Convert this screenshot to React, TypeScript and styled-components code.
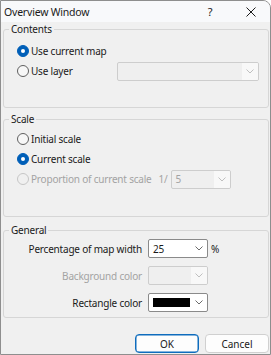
import React from 'react';
import styled, { createGlobalStyle } from 'styled-components';

const GlobalStyle = createGlobalStyle`
  body {
    margin: 0;
    font-family: "Noto Sans", "Open Sans", sans-serif;
    font-size: 10px;
    letter-spacing: -0.2px;
    color: #1a1a1a;
  }
`;

const WindowBlock = styled.div`
  box-sizing: border-box;
  width: 271px;
  height: 355px;
  display: flex;
  flex-direction: column;
  border: 1px solid #8e8e8e;
  border-top-right-radius: 8px;
  background: #f0f0f0;
  overflow: hidden;
`;

const TitleBarBlock = styled.div`
  height: 21px;
  display: flex;
  align-items: center;
  padding-left: 3px;
  background: #f8f9fb;
`;

const TitleText = styled.span`
  flex: 1;
  font-size: 10.5px;
`;

const HelpGlyph = styled.span`
  width: 16px;
  margin-right: 24px;
  text-align: center;
  font-size: 11px;
`;

const CloseBox = styled.span`
  display: flex;
  width: 18px;
  margin-right: 10px;
  justify-content: center;
`;

const BodyBlock = styled.div`
  flex: 1;
  display: flex;
  flex-direction: column;
  padding: 0 1px 1px 2px;
`;

const GroupBlock = styled.fieldset<{ $mt: number }>`
  margin: ${(p) => p.$mt}px 0 0 0;
  padding: 0;
  border: 1px solid #d6d6d6;
  border-radius: 3px;
  min-width: 0;
`;

const GroupTitle = styled.legend`
  margin-left: 5px;
  padding: 0 2px;
  line-height: 14px;
`;

const GroupContent = styled.div<{ $pt: number; $pb: number }>`
  display: flex;
  flex-direction: column;
  padding: ${(p) => p.$pt}px 9px ${(p) => p.$pb}px 13px;
`;

const RadioRow = styled.div`
  height: 20px;
  display: flex;
  align-items: center;
`;

const RadioMark = styled.span<{ $checked?: boolean; $disabled?: boolean }>`
  box-sizing: border-box;
  width: 12px;
  height: 12px;
  flex-shrink: 0;
  border-radius: 50%;
  margin-right: 2px;
  border: 1px solid ${(p) => (p.$checked ? '#005fb8' : p.$disabled ? '#c6c6c6' : '#5f5f5f')};
  background: ${(p) => (p.$checked ? '#005fb8' : p.$disabled ? 'transparent' : '#f7f7f7')};
  display: flex;
  align-items: center;
  justify-content: center;
  &::after {
    content: '';
    display: ${(p) => (p.$checked ? 'block' : 'none')};
    width: 4px;
    height: 4px;
    border-radius: 50%;
    background: #ffffff;
  }
`;

const RadioText = styled.span<{ $disabled?: boolean }>`
  color: ${(p) => (p.$disabled ? '#a3a3a3' : '#1a1a1a')};
  white-space: nowrap;
`;

const RatioText = styled.span`
  margin-left: 7px;
  margin-right: 3px;
  color: #a3a3a3;
`;

const ComboBlock = styled.div<{ $width: number; $disabled?: boolean; $push?: boolean }>`
  box-sizing: border-box;
  width: ${(p) => p.$width}px;
  height: 19px;
  display: flex;
  margin-left: ${(p) => (p.$push ? 'auto' : '0')};
  border: 1px solid ${(p) => (p.$disabled ? '#cdcdcd' : '#8a8a8a')};
  border-radius: 2px;
  background: ${(p) => (p.$disabled ? '#efefef' : '#ffffff')};
  overflow: hidden;
`;

const ComboValue = styled.span<{ $disabled?: boolean }>`
  flex: 1;
  display: flex;
  align-items: center;
  padding-left: 4px;
  color: ${(p) => (p.$disabled ? '#a3a3a3' : '#1a1a1a')};
`;

const ComboArrow = styled.span<{ $disabled?: boolean }>`
  width: 16px;
  display: flex;
  align-items: center;
  justify-content: center;
  background: ${(p) => (p.$disabled ? '#f8f8f8' : 'transparent')};
`;

const Swatch = styled.span`
  width: 37px;
  height: 9px;
  background: #000000;
`;

const FieldGrid = styled.div`
  display: grid;
  grid-template-columns: 138px 60px auto;
  column-gap: 6px;
  row-gap: 8px;
  align-items: center;
  padding: 2px 0 5px 0;
`;

const FieldLabel = styled.span<{ $disabled?: boolean }>`
  text-align: right;
  white-space: nowrap;
  color: ${(p) => (p.$disabled ? '#a3a3a3' : '#1a1a1a')};
`;

const UnitText = styled.span`
  margin-left: -3px;
`;

const FooterBlock = styled.div`
  margin-top: auto;
  display: flex;
  justify-content: flex-end;
  gap: 6px;
`;

const ButtonBlock = styled.button<{ $primary?: boolean }>`
  box-sizing: border-box;
  width: 64px;
  height: 19px;
  padding: 0;
  font: inherit;
  color: #1a1a1a;
  background: #fdfdfd;
  border: 1px solid ${(p) => (p.$primary ? '#0f6cbd' : '#d0d0d0')};
  box-shadow: ${(p) => (p.$primary ? 'inset 0 0 0 0.5px #0f6cbd' : 'none')};
  border-radius: 4px;
`;

function Chevron({ disabled }: { disabled?: boolean }) {
  return (
    <svg width="8" height="5" viewBox="0 0 8 5">
      <path d="M0.5 0.5 L4 4 L7.5 0.5" fill="none" stroke={disabled ? '#b8b8b8' : '#5a5a5a'} strokeWidth="0.9" />
    </svg>
  );
}

type ComboProps = {
  width: number;
  value?: string;
  disabled?: boolean;
  push?: boolean;
  swatch?: boolean;
};

function Combo({ width, value, disabled, push, swatch }: ComboProps) {
  return (
    <ComboBlock $width={width} $disabled={disabled} $push={push}>
      <ComboValue $disabled={disabled}>{swatch ? <Swatch /> : value}</ComboValue>
      <ComboArrow $disabled={disabled}>
        <Chevron disabled={disabled} />
      </ComboArrow>
    </ComboBlock>
  );
}

type RadioProps = {
  label: string;
  checked?: boolean;
  disabled?: boolean;
  children?: React.ReactNode;
};

function Radio({ label, checked, disabled, children }: RadioProps) {
  return (
    <RadioRow>
      <RadioMark $checked={checked} $disabled={disabled} />
      <RadioText $disabled={disabled}>{label}</RadioText>
      {children}
    </RadioRow>
  );
}

export default function App() {
  return (
    <>
      <GlobalStyle />
      <WindowBlock>
        <TitleBarBlock>
          <TitleText>Overview Window</TitleText>
          <HelpGlyph>?</HelpGlyph>
          <CloseBox>
            <svg width="10" height="10" viewBox="0 0 10 10">
              <path d="M0.5 0.5 L9.5 9.5 M9.5 0.5 L0.5 9.5" stroke="#1a1a1a" strokeWidth="1" />
            </svg>
          </CloseBox>
        </TitleBarBlock>
        <BodyBlock>
          <GroupBlock $mt={0}>
            <GroupTitle>Contents</GroupTitle>
            <GroupContent $pt={5} $pb={26}>
              <Radio label="Use current map" checked />
              <Radio label="Use layer">
                <Combo width={142} disabled push />
              </Radio>
            </GroupContent>
          </GroupBlock>
          <GroupBlock $mt={4}>
            <GroupTitle>Scale</GroupTitle>
            <GroupContent $pt={3} $pb={27}>
              <Radio label="Initial scale" />
              <Radio label="Current scale" checked />
              <Radio label="Proportion of current scale" disabled>
                <RatioText>1/</RatioText>
                <Combo width={60} value="5" disabled />
              </Radio>
            </GroupContent>
          </GroupBlock>
          <GroupBlock $mt={6}>
            <GroupTitle>General</GroupTitle>
            <FieldGrid>
              <FieldLabel>Percentage of map width</FieldLabel>
              <Combo width={60} value="25" />
              <UnitText>%</UnitText>
              <FieldLabel $disabled>Background color</FieldLabel>
              <Combo width={60} disabled />
              <span />
              <FieldLabel>Rectangle color</FieldLabel>
              <Combo width={60} swatch />
              <span />
            </FieldGrid>
          </GroupBlock>
          <FooterBlock>
            <ButtonBlock $primary>OK</ButtonBlock>
            <ButtonBlock>Cancel</ButtonBlock>
          </FooterBlock>
        </BodyBlock>
      </WindowBlock>
    </>
  );
}
